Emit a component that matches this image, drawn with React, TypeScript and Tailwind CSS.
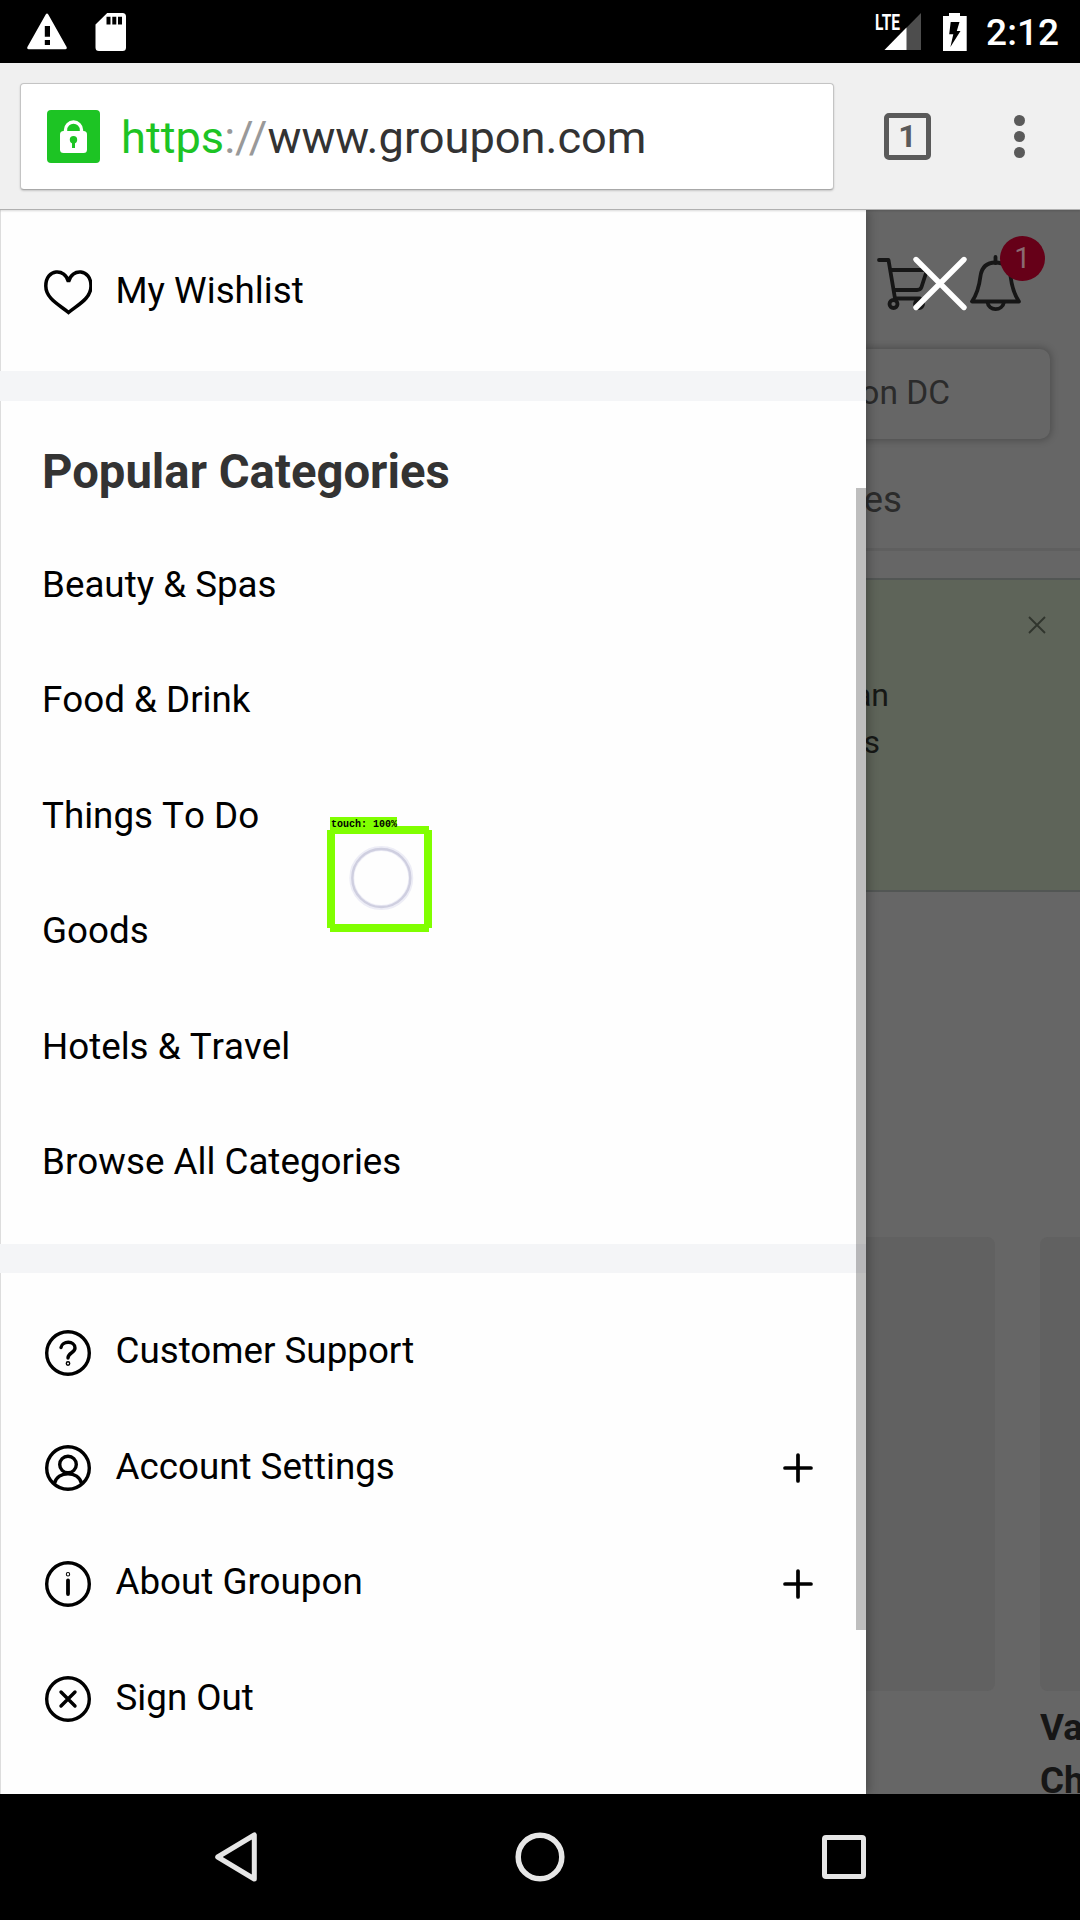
import React from "react";

const CATEGORIES = [
  "Beauty & Spas",
  "Food & Drink",
  "Things To Do",
  "Goods",
  "Hotels & Travel",
  "Browse All Categories",
];

function StatusBar() {
  return (
    <header className="flex h-[63px] shrink-0 items-center bg-black text-white">
      <svg className="ml-[27px] h-[40px] w-[40px]" viewBox="0 0 40 40">
        <path
          fillRule="evenodd"
          fill="#fff"
          d="M18.7 2.4 Q20 .4 21.3 2.4 L39.6 35 Q40.3 37.2 38.2 37.2 H1.8 Q-.3 37.2 .4 35 Z M17.8 14 V24.8 H23 V14 Z M17.8 28 V33 H23 V28 Z"
        />
      </svg>
      <svg className="ml-[28px] h-[40px] w-[32px]" viewBox="0 0 32 40">
        <path
          fillRule="evenodd"
          fill="#fff"
          d="M12.2 1 H27.5 Q31 1 31 4.5 V35.5 Q31 39 27.5 39 H4 Q.5 39 .5 35.5 V12.4 Z M11.5 4.8 V12.5 H15.5 V4.8 Z M17.3 4.8 V12.5 H21.3 V4.8 Z M23 4.8 V12.5 H27 V4.8 Z"
        />
      </svg>
      <div className="ml-auto flex items-center">
        <svg className="h-[40px] w-[48px] overflow-visible" viewBox="0 0 48 40">
          <path d="M47 1 V38 H10.5 Z" fill="#4d4d4d" />
          <path d="M32.5 15.5 V38 H10.5 Z" fill="#fff" />
          <path d="M0 0 H26 V18 H0 Z" fill="#000" />
          <text
            x="1"
            y="17.8"
            fill="#fff"
            fontFamily="Roboto"
            fontWeight="700"
            fontSize="21.5"
            textLength="25"
            lengthAdjust="spacingAndGlyphs"
          >
            LTE
          </text>
        </svg>
        <svg className="ml-[20px] h-[40px] w-[26px]" viewBox="0 0 26 40">
          <path d="M7 1 H18 V4 H24.7 V39 H1 V4 H7 Z" fill="#fff" />
          <path d="M8.7 10 H17.5 L14.8 19 H18.5 L8.4 35 L11.3 22.2 H7.2 Z" fill="#000" />
        </svg>
        <span className="mt-[2px] ml-[18px] mr-[20px] w-[74px] text-[37px] leading-none font-medium tracking-[0.1px]">
          2:12
        </span>
      </div>
    </header>
  );
}

function Toolbar() {
  return (
    <div className="relative z-20 flex h-[147px] shrink-0 items-center border-b border-[#b0b0b0] bg-[#f0f0f0] shadow-[0_1px_2px_rgba(0,0,0,0.15)]">
      <div className="ml-[20px] flex h-[107px] w-[814px] items-center rounded-[4px] border border-[#c4c4c4] border-b-[#a8a8a8] bg-white shadow-[0_1px_2px_rgba(0,0,0,0.18)]">
        <svg className="ml-[26px] h-[53px] w-[53px]" viewBox="0 0 53 53">
          <rect width="53" height="53" rx="4" fill="#1dc424" />
          <path d="M18.5 22 V20 a8 8 0 0 1 16 0 V22" fill="none" stroke="#fff" strokeWidth="3.4" />
          <rect x="13" y="21" width="27" height="22" rx="3.5" fill="#fff" />
          <circle cx="26.5" cy="29.8" r="3.7" fill="#1dc424" />
          <path d="M25 31 H28 V38 H25 Z" fill="#1dc424" />
        </svg>
        <span className="mt-[3px] ml-[21px] text-[45.2px] leading-none whitespace-nowrap text-[#333]">
          <span className="text-[#1dc424]">https</span>
          <span className="text-[#999]">://</span>www.groupon.com
        </span>
      </div>
      <div className="ml-[50px] flex h-[47px] w-[47px] items-center justify-center rounded-[5px] border-[5px] border-[#5a5a5a] text-[32px] leading-none font-bold text-[#5a5a5a]">
        1
      </div>
      <div className="ml-[83px] flex flex-col gap-[5px]">
        <i className="size-[11px] rounded-full bg-[#5a5a5a]" />
        <i className="size-[11px] rounded-full bg-[#5a5a5a]" />
        <i className="size-[11px] rounded-full bg-[#5a5a5a]" />
      </div>
    </div>
  );
}

/* The site underneath the open drawer, already dimmed. */
function DimmedPage() {
  return (
    <div className="flex h-full flex-col bg-[#666]">
      <div className="flex h-[139px] shrink-0 justify-end pt-[45px]">
        <svg className="h-[57px] w-[54px]" viewBox="0 0 54 57" fill="none" stroke="#161616" strokeWidth="3.8" strokeLinecap="round" strokeLinejoin="round">
          <path d="M3 5 H12.500 L19 43.500 H44" />
          <path d="M15 15 H51 L45.500 32 Q44.500 35 41 35 H18" />
          <circle cx="17.500" cy="49" r="4" />
          <circle cx="43" cy="49" r="4" />
        </svg>
        <div className="relative mr-[59px] ml-[39px] h-[57px] w-[52px]">
          <svg className="h-[57px] w-[52px]" viewBox="0 0 52 57" fill="none" stroke="#161616" strokeWidth="3.8" strokeLinejoin="round">
            <path d="M26.500 2 V8" strokeLinecap="round" />
            <path d="M26.500 7.500 C16.500 7.500 12.500 14 11.500 21 C10 33 7.500 40 3 46.500 H50 C45.500 40 43 33 41.500 21 C40.500 14 36.500 7.500 26.500 7.500 Z" />
            <path d="M18.500 47 C19.500 56.500 33.500 56.500 35 47" />
          </svg>
          <span className="absolute top-[-19px] left-[31px] flex size-[45px] items-center justify-center rounded-full bg-[#660018] text-[29px] leading-none text-[#8a6a72]">
            1
          </span>
        </div>
      </div>
      <div className="mr-[30px] ml-[30px] flex h-[90px] shrink-0 items-center justify-end rounded-[10px] bg-[#666] pr-[100px] pb-[2px] text-[33.500px] text-[#2b2b2b] shadow-[0_0_7px_2px_rgba(0,0,0,0.22)]">
        on DC
      </div>
      <div className="flex h-[112px] shrink-0 items-center justify-end border-b-[3px] border-[#5f5f5f] pt-[13px] pr-[178px] text-[36.75px] text-[#2b2b2b]">
        es
      </div>
      <div className="mt-[27px] flex h-[314px] shrink-0 flex-col items-end border-y-2 border-[#525654] bg-[#5e6459] text-[32px] leading-[47px] text-[#161816]">
        <svg className="mt-[36px] mr-[34px] h-[18px] w-[18px]" viewBox="0 0 18 18" stroke="#30352d" strokeWidth="1.8">
          <path d="M1 1 L17 17 M17 1 L1 17" />
        </svg>
        <span className="mt-[38px] mr-[191px]">an</span>
        <span className="mr-[200px]">s</span>
      </div>
      <div className="mt-[345px] flex h-[454px] shrink-0 gap-[45px] pl-[587px]">
        <div className="w-[408px] shrink-0 rounded-lg bg-[#616161]" />
        <div className="w-[40px] shrink-0 rounded-l-lg bg-[#616161]" />
      </div>
      <div className="mt-[11px] ml-[1040px] overflow-hidden text-[36.75px] leading-[52.5px] font-bold whitespace-nowrap text-[#161616]">
        Va
        <br />
        Ch
      </div>
    </div>
  );
}

function RoundIcon({ children }: { children: React.ReactNode }) {
  return (
    <svg
      className="mt-[5px] h-[48px] w-[48px]"
      viewBox="0 0 48 48"
      fill="none"
      stroke="#000"
      strokeWidth="3.4"
      strokeLinecap="round"
      strokeLinejoin="round"
    >
      <circle cx="24" cy="24" r="21.3" />
      {children}
    </svg>
  );
}

function Row({ icon, label, plus }: { icon: React.ReactNode; label: string; plus?: boolean }) {
  return (
    <li className="flex h-[115.5px] items-center pl-[43px]">
      {icon}
      <span className="mt-[3px] ml-[23.500px]">{label}</span>
      {plus && (
        <svg className="mt-[5px] mr-[53px] ml-auto h-[30px] w-[30px]" viewBox="0 0 30 30" stroke="#000" strokeWidth="3.7" strokeLinecap="round">
          <path d="M15 2 V28 M2 15 H28" />
        </svg>
      )}
    </li>
  );
}

function Drawer() {
  return (
    <aside className="absolute top-0 left-0 flex h-full w-[866px] flex-col bg-[#fefefe] text-[36.75px] leading-none text-black shadow-[2px_0_10px_rgba(0,0,0,0.3)]">
      <ul className="h-[161px] shrink-0 border-l border-[#ddd] pt-[22px]">
        <Row
          label="My Wishlist"
          icon={
            <svg className="mt-[6px] ml-[-1px] h-[48px] w-[49px]" viewBox="0 0 49 48" fill="none" stroke="#000" strokeWidth="3.5">
              <path d="M25.500 43.500 C17.500 36.500 2.800 30 2.800 17 C2.800 -.5 22.500 -1.500 25.500 13 C28.500 -1.500 48 -.5 48 17 C48 30 33.500 36.500 25.500 43.500 Z" />
            </svg>
          }
        />
      </ul>
      <div className="h-[30px] shrink-0 bg-[#f4f5f7]" />
      <section className="h-[843px] shrink-0 border-l border-[#ddd] pl-[41px]">
        <h2 className="flex h-[126.500px] items-center pt-[17px] text-[47.250px] font-bold text-[#333]">
          Popular Categories
        </h2>
        <ul className="[font-kerning:none]">
          {CATEGORIES.map((name) => (
            <li key={name} className="flex h-[115.5px] items-center">
              {name}
            </li>
          ))}
        </ul>
      </section>
      <div className="h-[29px] shrink-0 bg-[#f4f5f7]" />
      <ul className="grow border-l border-[#ddd] pt-[19.500px]">
        <Row
          label="Customer Support"
          icon={
            <RoundIcon>
              <path d="M17 18.500 C18 11.500 31 11.500 31 19 C31 24 24 23.500 24 29" />
              <circle cx="24" cy="34.500" r="0.7" />
            </RoundIcon>
          }
        />
        <Row
          plus
          label="Account Settings"
          icon={
            <RoundIcon>
              <circle cx="24" cy="20.500" r="8.300" />
              <path d="M10.500 39.500 C13 26.500 35 26.500 37.500 39.500" />
            </RoundIcon>
          }
        />
        <Row
          plus
          label="About Groupon"
          icon={
            <RoundIcon>
              <path d="M24 20.500 V34" strokeWidth="3.8" />
              <circle cx="24" cy="14.300" r="0.5" />
            </RoundIcon>
          }
        />
        <Row
          label="Sign Out"
          icon={
            <RoundIcon>
              <path d="M17 17 L31 31 M31 17 L17 31" />
            </RoundIcon>
          }
        />
      </ul>
      <div className="absolute top-[278px] right-0 h-[1142px] w-[10px] bg-black/25" />
    </aside>
  );
}

function TouchMarker() {
  return (
    <div className="absolute top-[607px] left-[327px] h-[116px] w-[106px]">
      <svg className="h-[116px] w-[106px]" viewBox="0 0 106 116">
        <path
          d="M3 9 H102 V13 H105 V111 H102 V115 H3 V111 H0 V13 H3 Z M8 17 V107 H97 V17 Z"
          fill="#80ff00"
          fillRule="evenodd"
        />
        <circle cx="54.300" cy="61" r="29.500" fill="none" stroke="#ededf6" strokeWidth="5" />
        <circle cx="54.300" cy="61" r="29" fill="none" stroke="#cfcfe0" strokeWidth="2.400" />
      </svg>
      <span className="absolute top-0 left-[3px] h-[12px] w-[67px] bg-[#80ff00] pl-px font-['Liberation_Mono',monospace] text-[10px] leading-[15px] font-bold whitespace-nowrap text-black">
        touch: 100%
      </span>
    </div>
  );
}

function NavigationBar() {
  return (
    <nav className="flex h-[126px] shrink-0 items-center bg-black">
      <svg className="ml-[213px] h-[52px] w-[46px]" viewBox="0 0 46 52" fill="none" stroke="#e6e6e6" strokeWidth="5" strokeLinejoin="round">
        <path d="M41.300 4 V48 L4.700 26 Z" />
      </svg>
      <svg className="ml-[255px] h-[52px] w-[52px]" viewBox="0 0 52 52" fill="none" stroke="#e6e6e6" strokeWidth="5.500">
        <circle cx="26" cy="26" r="21.800" />
      </svg>
      <i className="ml-[256px] size-[44px] rounded-[4px] border-[5px] border-[#e6e6e6]" />
    </nav>
  );
}

export default function App() {
  return (
    <div className="flex h-[1920px] w-[1080px] flex-col overflow-hidden bg-black font-[Roboto,sans-serif]">
      <StatusBar />
      <Toolbar />
      <main className="relative h-[1584px] shrink-0 overflow-hidden">
        <DimmedPage />
        <Drawer />
        <TouchMarker />
        <svg className="absolute top-[45px] left-[912px] h-[57px] w-[56px]" viewBox="0 0 56 57" stroke="#fff" strokeWidth="5.400" strokeLinecap="round">
          <path d="M4 4.500 L52 52.500 M52 4.500 L4 52.500" />
        </svg>
      </main>
      <NavigationBar />
    </div>
  );
}
